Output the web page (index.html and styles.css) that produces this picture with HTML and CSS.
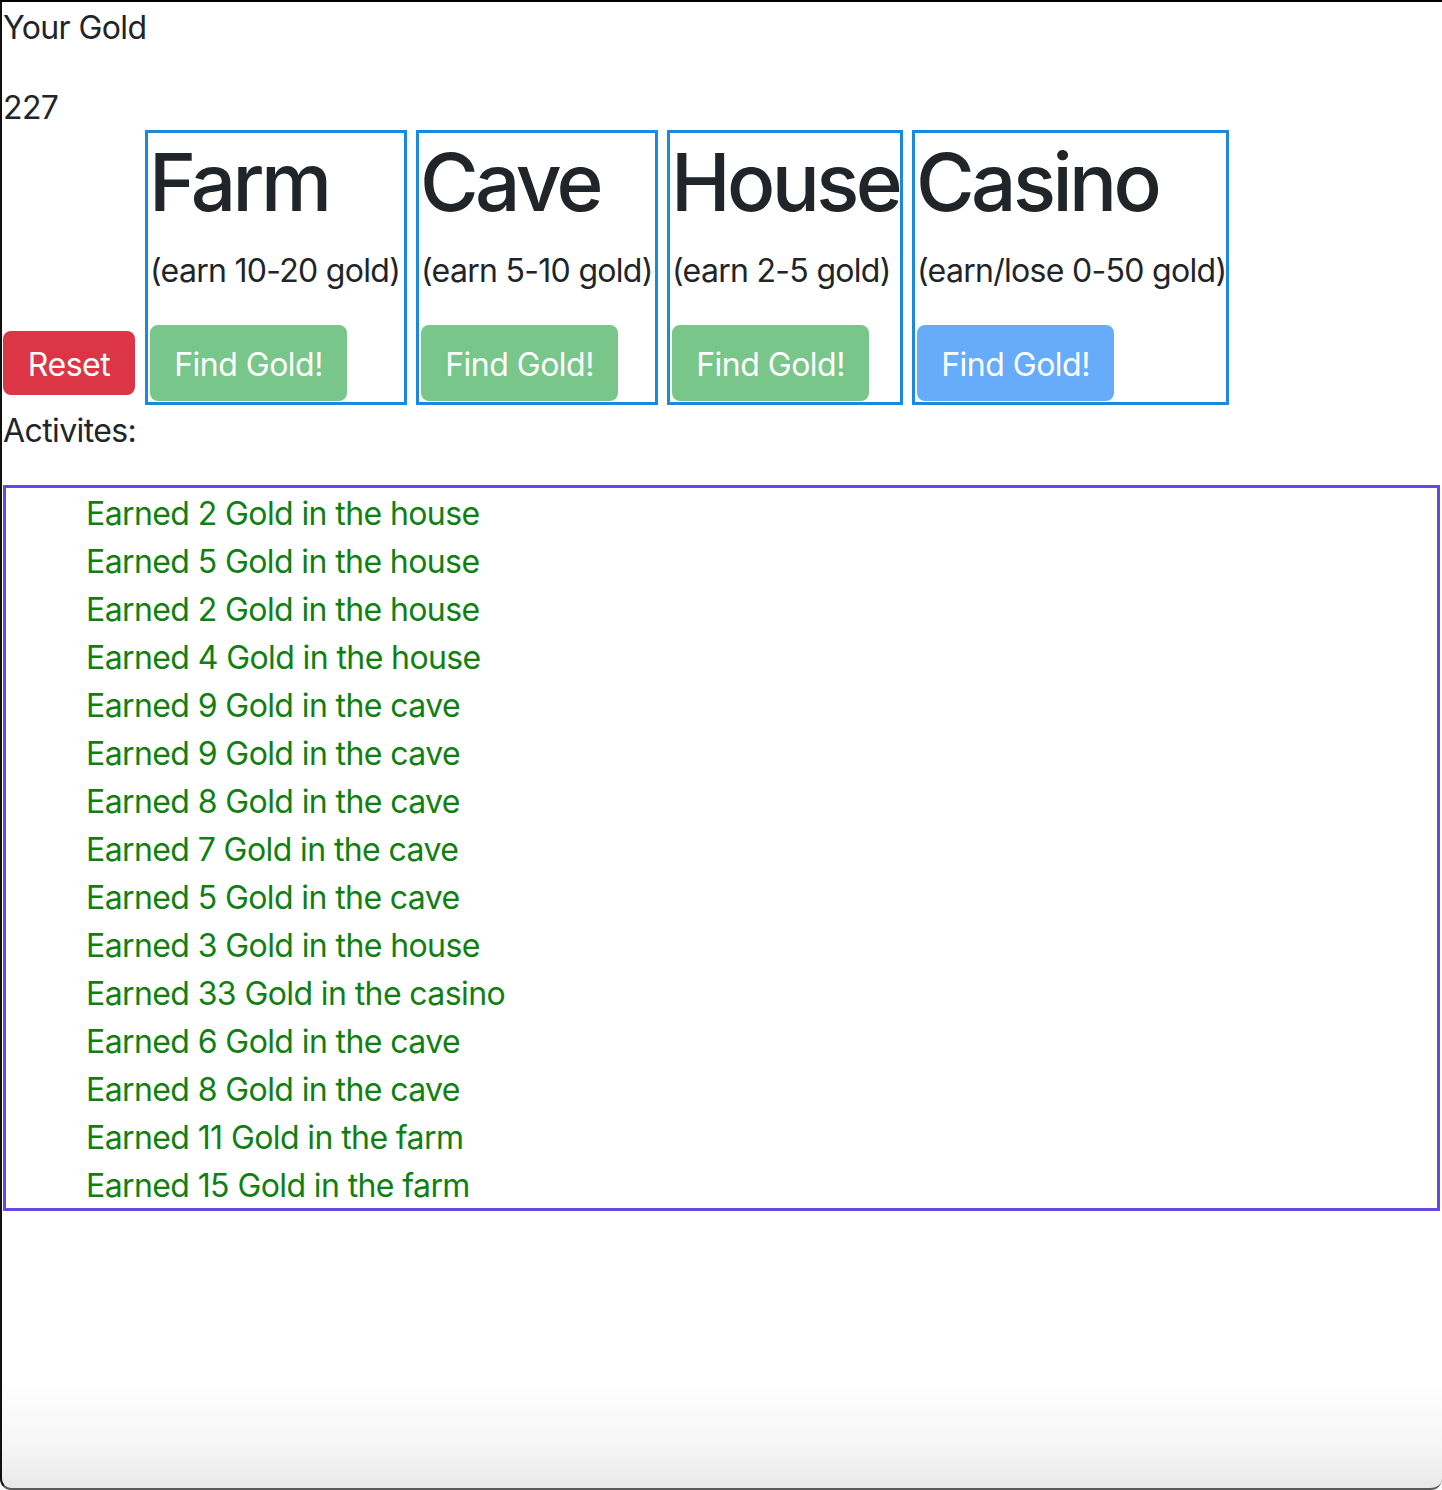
FILE: index.html
```html
<!DOCTYPE html>
<html lang="en">
<head>
<meta charset="utf-8">
<title>Gold Game</title>
<link rel="stylesheet" href="styles.css">
</head>
<body>
<div class="window">
  <p class="label">Your Gold</p>
  <p class="gold">227</p>
  <div class="row">
    <button class="btn btn-reset">Reset</button>
    <div class="card card-farm">
      <h1 class="card-title">Farm</h1>
      <p class="card-text">(earn 10-20 gold)</p>
      <button class="btn btn-find">Find Gold!</button>
    </div>
    <div class="card card-cave">
      <h1 class="card-title">Cave</h1>
      <p class="card-text">(earn 5-10 gold)</p>
      <button class="btn btn-find">Find Gold!</button>
    </div>
    <div class="card card-house">
      <h1 class="card-title">House</h1>
      <p class="card-text">(earn 2-5 gold)</p>
      <button class="btn btn-find">Find Gold!</button>
    </div>
    <div class="card card-casino">
      <h1 class="card-title">Casino</h1>
      <p class="card-text">(earn/lose 0-50 gold)</p>
      <button class="btn btn-find btn-blue">Find Gold!</button>
    </div>
  </div>
  <p class="label activities">Activites:</p>
  <ul class="log">
    <li>Earned 2 Gold in the house</li>
    <li>Earned 5 Gold in the house</li>
    <li>Earned 2 Gold in the house</li>
    <li>Earned 4 Gold in the house</li>
    <li>Earned 9 Gold in the cave</li>
    <li>Earned 9 Gold in the cave</li>
    <li>Earned 8 Gold in the cave</li>
    <li>Earned 7 Gold in the cave</li>
    <li>Earned 5 Gold in the cave</li>
    <li>Earned 3 Gold in the house</li>
    <li>Earned 33 Gold in the casino</li>
    <li>Earned 6 Gold in the cave</li>
    <li>Earned 8 Gold in the cave</li>
    <li>Earned 11 Gold in the farm</li>
    <li>Earned 15 Gold in the farm</li>
  </ul>
</div>
</body>
</html>
```
FILE: styles.css
```css
html, body {
  margin: 0;
  padding: 0;
  background: #ffffff;
}

body {
  font-family: Inter, "Noto Sans", "Liberation Sans", sans-serif;
  font-size: 32px;
  line-height: 48px;
  letter-spacing: -0.6px;
  color: #212529;
}

.window {
  box-sizing: border-box;
  height: 1490px;
  border-top: 2px solid #000000;
  border-left: 2px solid #111111;
  border-bottom: 2px solid #5a5a5a;
  border-bottom-left-radius: 11px;
  border-bottom-right-radius: 11px;
  padding: 0 2px 0 1px;
  overflow: hidden;
  background: linear-gradient(to bottom, #ffffff 0, #ffffff 1380px, #f5f5f5 1445px, #e9e9e9 100%);
}

.label,
.gold {
  margin: 0;
  padding-top: 4px;
  line-height: 44px;
}

.label {
  margin-bottom: 32px;
}

.gold {
  margin-bottom: 0;
}

.row {
  display: flex;
  align-items: flex-end;
  column-gap: 9px;
}

.btn {
  box-sizing: border-box;
  font-family: inherit;
  font-size: 32px;
  line-height: 48px;
  letter-spacing: -0.5px;
  font-weight: 400;
  color: #ffffff;
  border-radius: 8px;
  cursor: pointer;
  white-space: nowrap;
}

.btn-reset {
  width: 132px;
  height: 64px;
  padding: 8px 0 4px;
  margin: 0 1px 10px 0;
  background: #dc3545;
  border: 2px solid #dc3545;
}

.btn-find {
  width: 197px;
  height: 76px;
  padding: 14px 0 10px;
  background: #79c68a;
  border: 2px solid #79c68a;
}

.btn-blue {
  background: #67acfa;
  border-color: #67acfa;
}

.card {
  box-sizing: border-box;
  border: 3px solid #1b89de;
  padding: 0 1px 1px 2px;
  white-space: nowrap;
}

.card-farm { width: 262px; }
.card-cave { width: 242px; }
.card-house { width: 236px; }
.card-casino { width: 317px; }

.card-title {
  margin: 0 0 16px -1px;
  padding-top: 2px;
  font-size: 80px;
  line-height: 94px;
  font-weight: 500;
  letter-spacing: -3.6px;
}

.card-text {
  margin: 0 0 32px 0;
  padding-top: 4px;
  line-height: 44px;
  letter-spacing: -0.7px;
}

.log {
  list-style: none;
  margin: 0;
  padding: 0 0 0 80px;
  border: 3px solid #6747e3;
  color: #0f7f12;
}

.log li {
  padding-top: 4px;
  line-height: 44px;
}
```
